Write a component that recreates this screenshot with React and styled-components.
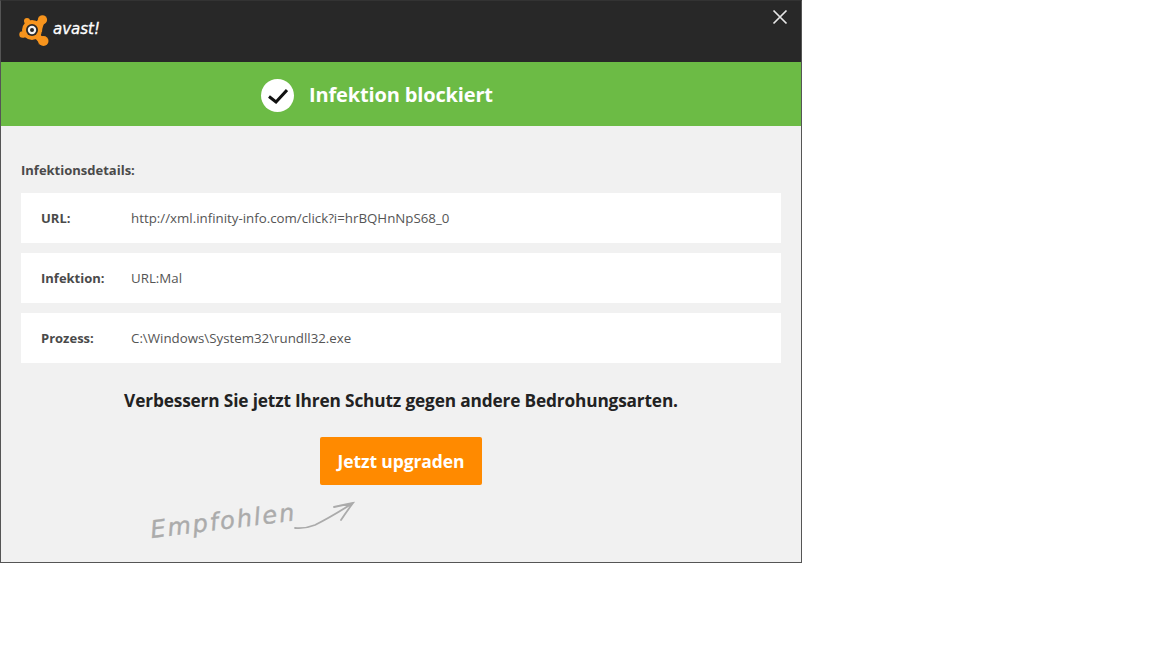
import React from 'react';
import styled, { createGlobalStyle } from 'styled-components';

const GlobalStyle = createGlobalStyle`
  html, body {
    margin: 0;
    padding: 0;
    background: #fff;
    font-family: "Open Sans", "Liberation Sans", sans-serif;
  }
`;

const Window = styled.div`
  box-sizing: border-box;
  width: 802px;
  height: 563px;
  border: 1px solid #555;
  border-top-color: #333;
  background: #f1f1f1;
  display: flex;
  flex-direction: column;
`;

const TitleBar = styled.header`
  height: 61px;
  background: #282828;
  display: flex;
  justify-content: space-between;
  padding: 0 13px 0 17px;
  flex-shrink: 0;
`;

const Logo = styled.div`
  display: flex;
  align-items: center;
  gap: 1px;
  height: 61px;
  padding-bottom: 1px;
  box-sizing: border-box;
`;

const LogoWord = styled.span`
  color: #fff;
  font-family: "DejaVu Sans", sans-serif;
  font-size: 15px;
  font-style: italic;
  -webkit-text-stroke: 0.3px #fff;
  margin-top: -4px;
`;

const CloseButton = styled.button`
  border: 0;
  background: none;
  padding: 0;
  margin-top: 8px;
  width: 16px;
  height: 16px;
  display: block;
`;

const Banner = styled.div`
  height: 64px;
  background: #6cbb45;
  display: flex;
  align-items: center;
  padding-left: 260px;
  gap: 15px;
  flex-shrink: 0;
`;

const CheckBadge = styled.div`
  width: 33px;
  height: 33px;
  border-radius: 50%;
  background: #fff;
  display: flex;
  align-items: center;
  justify-content: center;
  margin-top: 3px;
`;

const BannerTitle = styled.h1`
  margin: 0;
  color: #fff;
  font-size: 20px;
  font-weight: 700;
  letter-spacing: -0.15px;
`;

const Content = styled.main`
  flex: 1;
  padding: 35px 20px 0;
  display: flex;
  flex-direction: column;
`;

const SectionLabel = styled.div`
  font-size: 13px;
  font-weight: 700;
  color: #4a4a4a;
  line-height: 18px;
  margin-bottom: 14px;
`;

const Rows = styled.div`
  display: flex;
  flex-direction: column;
  gap: 10px;
`;

const Row = styled.div`
  height: 50px;
  background: #fff;
  display: flex;
  align-items: center;
  padding-left: 20px;
`;

const RowKey = styled.span`
  width: 90px;
  font-size: 13px;
  font-weight: 700;
  color: #4a4a4a;
`;

const RowValue = styled.span`
  font-size: 13.3px;
  color: #555;
`;

const Pitch = styled.p`
  margin: 26px 0 0;
  text-align: center;
  font-size: 17.25px;
  line-height: 24px;
  font-weight: 700;
  color: #222;
  letter-spacing: -0.15px;
`;

const UpgradeButton = styled.button`
  display: block;
  align-self: center;
  width: 162px;
  height: 48px;
  margin-top: 24px;
  border: 0;
  border-radius: 2px;
  background: #ff8a00;
  color: #fff;
  font-family: inherit;
  font-size: 17.5px;
  font-weight: 700;
  letter-spacing: -0.1px;
`;

const Recommended = styled.div`
  display: flex;
  align-items: flex-start;
  margin: 14px 0 0 131px;
`;

const RecommendedText = styled.span`
  font-family: "DejaVu Sans", sans-serif;
  font-style: italic;
  font-size: 24px;
  letter-spacing: 2px;
  color: #ababab;
  -webkit-text-stroke: 0.4px #ababab;
  transform: rotate(-7deg);
  transform-origin: left bottom;
  margin-top: 18px;
  line-height: 26px;
`;

const ArrowMark = styled.svg`
  margin: 1px 0 0 -6px;
  flex-shrink: 0;
`;

const AvastSplat = () => (
  <svg width="34" height="32" viewBox="0 0 34 32">
    <g fill="#f7941d">
      <circle cx="14" cy="15" r="10" />
      <circle cx="24.5" cy="4.8" r="4.6" />
      <circle cx="9" cy="6" r="3" />
      <circle cx="4.5" cy="19.5" r="3.2" />
      <circle cx="25.5" cy="26" r="5" />
      <path d="M7 7 L11 5 L17 8 L10 13 Z" />
      <path d="M16 7 Q20 7 21 2 L28 6 Q24 11 24 17 L15 15 Z" />
      <path d="M3 17 Q7 18 8 15 L11 22 L5 22.5 Z" />
      <path d="M16 23 L23 18 Q22 21 25 21.5 L21 30 Q21 26 16 23 Z" />
    </g>
    <circle cx="14" cy="15" r="6" fill="#282828" />
    <circle cx="14" cy="15" r="4.2" fill="#f2f2f2" />
    <circle cx="14" cy="15" r="2" fill="#282828" />
  </svg>
);

const rows = [
  { key: 'URL:', value: 'http://xml.infinity-info.com/click?i=hrBQHnNpS68_0' },
  { key: 'Infektion:', value: 'URL:Mal' },
  { key: 'Prozess:', value: 'C:\\Windows\\System32\\rundll32.exe' }
];

const App = () => (
  <>
    <GlobalStyle />
    <Window>
      <TitleBar>
        <Logo>
          <AvastSplat />
          <LogoWord>avast!</LogoWord>
        </Logo>
        <CloseButton aria-label="Schließen">
          <svg width="16" height="16" viewBox="0 0 16 16">
            <path d="M1.5 1.5 L14.5 14.5 M14.5 1.5 L1.5 14.5" stroke="#e6e6e6" strokeWidth="1.7" />
          </svg>
        </CloseButton>
      </TitleBar>
      <Banner>
        <CheckBadge>
          <svg width="20" height="16" viewBox="0 0 20 16">
            <path d="M1 8.5 L8 14 L19 2" fill="none" stroke="#111" strokeWidth="3" />
          </svg>
        </CheckBadge>
        <BannerTitle>Infektion blockiert</BannerTitle>
      </Banner>
      <Content>
        <SectionLabel>Infektionsdetails:</SectionLabel>
        <Rows>
          {rows.map(row => (
            <Row key={row.key}>
              <RowKey>{row.key}</RowKey>
              <RowValue>{row.value}</RowValue>
            </Row>
          ))}
        </Rows>
        <Pitch>Verbessern Sie jetzt Ihren Schutz gegen andere Bedrohungsarten.</Pitch>
        <UpgradeButton>Jetzt upgraden</UpgradeButton>
        <Recommended>
          <RecommendedText>Empfohlen</RecommendedText>
          <ArrowMark width="64" height="34" viewBox="0 0 64 34">
            <path
              d="M2 28 Q12 29 22 25 Q38 17 60 3 M41 7 Q50 5 60 3 Q54 11 48 20"
              fill="none"
              stroke="#ababab"
              strokeWidth="1.8"
              strokeLinecap="round"
            />
          </ArrowMark>
        </Recommended>
      </Content>
    </Window>
  </>
);

export default App;
